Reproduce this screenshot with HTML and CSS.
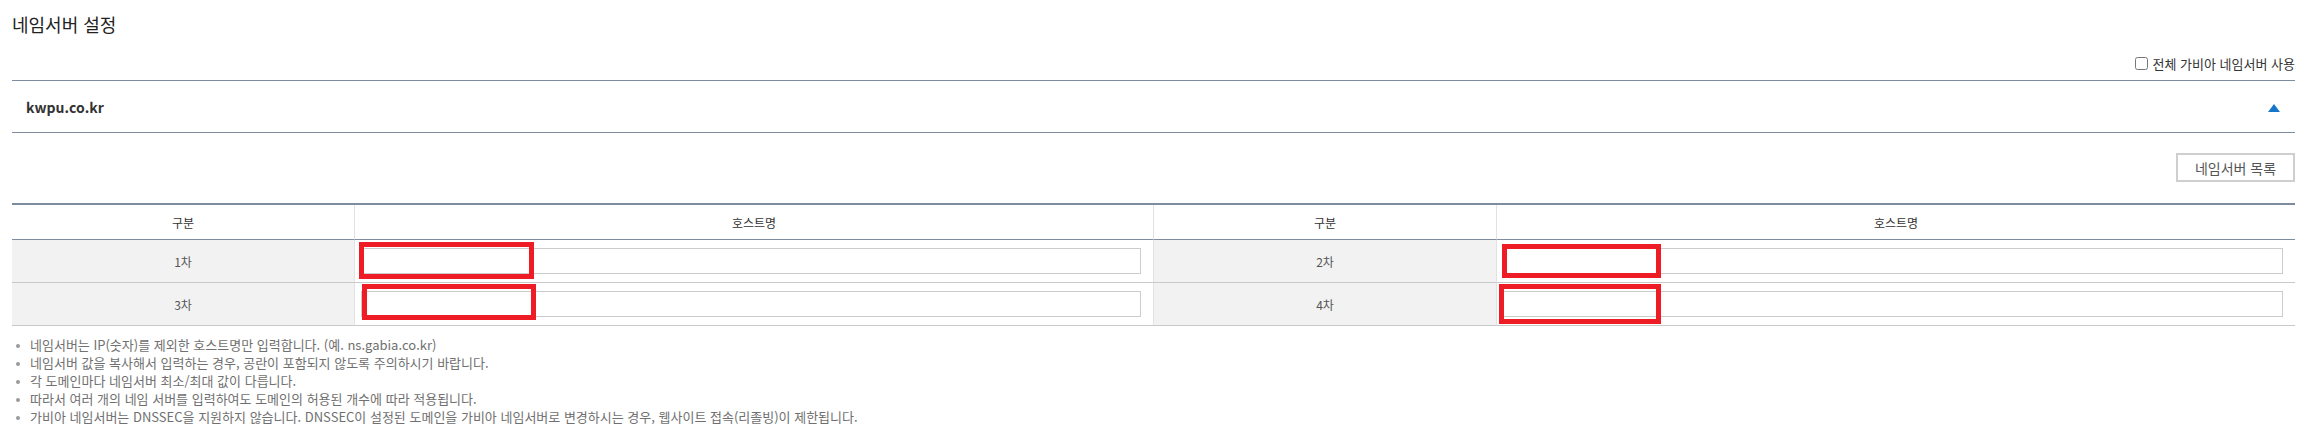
FILE: index.html
```html
<!DOCTYPE html>
<html lang="ko">
<head>
<meta charset="utf-8">
<title>네임서버 설정</title>
<link rel="stylesheet" href="styles.css">
</head>
<body>
<div class="page">
  <h2 class="title">네임서버 설정</h2>
  <div class="opt-row">
    <label class="chk"><input type="checkbox" class="chk-box"><span>전체 가비아 네임서버 사용</span></label>
  </div>
  <div class="domain-bar">
    <span class="domain">kwpu.co.kr</span>
    <span class="arrow"></span>
  </div>
  <div class="btn-row">
    <button class="btn" type="button">네임서버 목록</button>
  </div>
  <div class="ns-grid">
    <div class="hd">구분</div>
    <div class="hd sep">호스트명</div>
    <div class="hd sep">구분</div>
    <div class="hd sep">호스트명</div>

    <div class="lbl">1차</div>
    <div class="inp sep"><input type="text" class="field"><span class="mark m1"></span></div>
    <div class="lbl sep">2차</div>
    <div class="inp sep"><input type="text" class="field"><span class="mark m2"></span></div>

    <div class="lbl">3차</div>
    <div class="inp sep"><input type="text" class="field"><span class="mark m3"></span></div>
    <div class="lbl sep">4차</div>
    <div class="inp sep"><input type="text" class="field"><span class="mark m4"></span></div>
  </div>
  <ul class="notes">
    <li>네임서버는 IP(숫자)를 제외한 호스트명만 입력합니다. (예. ns.gabia.co.kr)</li>
    <li>네임서버 값을 복사해서 입력하는 경우, 공란이 포함되지 않도록 주의하시기 바랍니다.</li>
    <li>각 도메인마다 네임서버 최소/최대 값이 다릅니다.</li>
    <li>따라서 여러 개의 네임 서버를 입력하여도 도메인의 허용된 개수에 따라 적용됩니다.</li>
    <li>가비아 네임서버는 DNSSEC을 지원하지 않습니다. DNSSEC이 설정된 도메인을 가비아 네임서버로 변경하시는 경우, 웹사이트 접속(리졸빙)이 제한됩니다.</li>
  </ul>
</div>
</body>
</html>
```

FILE: styles.css
```css
html, body {
  margin: 0;
  padding: 0;
  background: #ffffff;
}
body {
  font-family: "Noto Sans CJK KR", "Noto Sans", sans-serif;
  color: #333333;
}
.page {
  padding: 0 12px;
}
.title {
  margin: 0;
  padding-top: 12px;
  font-size: 18px;
  line-height: 24px;
  font-weight: 400;
  color: #222222;
}
.opt-row {
  height: 44px;
  box-sizing: border-box;
  padding-top: 10px;
  display: flex;
  justify-content: flex-end;
  align-items: center;
}
.chk {
  display: flex;
  align-items: center;
  gap: 5px;
  font-size: 13px;
  color: #333333;
}
.chk-box {
  margin: 0;
  width: 13px;
  height: 13px;
}
.domain-bar {
  height: 53px;
  box-sizing: border-box;
  border-top: 1px solid #7d8d9d;
  border-bottom: 1px solid #7d8d9d;
  display: flex;
  align-items: center;
  justify-content: space-between;
  padding: 0 15px 0 14px;
}
.domain {
  font-size: 14px;
  font-weight: 700;
  color: #333333;
}
.arrow {
  width: 0;
  height: 0;
  border-left: 6px solid transparent;
  border-right: 6px solid transparent;
  border-bottom: 8px solid #1676c9;
  margin-top: 2px;
}
.btn-row {
  display: flex;
  justify-content: flex-end;
  padding: 20px 0 21px;
}
.btn {
  width: 119px;
  height: 29px;
  box-sizing: border-box;
  border: 2px solid #cfcfcf;
  background: #ffffff;
  font-family: "Noto Sans CJK KR", "Noto Sans", sans-serif;
  font-size: 14px;
  color: #555555;
  padding: 0;
}
.ns-grid {
  display: grid;
  grid-template-columns: 342fr 799fr 343fr 799fr;
  border-top: 2px solid #7d8d9d;
}
.hd {
  height: 35px;
  box-sizing: border-box;
  border-bottom: 1px solid #7d8d9d;
  display: flex;
  align-items: center;
  justify-content: center;
  font-size: 12px;
  color: #333333;
  background: #ffffff;
}
.sep {
  border-left: 1px solid #e2e2e2;
}
.lbl {
  height: 43px;
  box-sizing: border-box;
  border-bottom: 1px solid #c8c8c8;
  background: #f2f2f2;
  display: flex;
  align-items: center;
  justify-content: center;
  font-size: 12px;
  color: #555555;
}
.inp {
  position: relative;
  height: 43px;
  box-sizing: border-box;
  border-bottom: 1px solid #c8c8c8;
  display: flex;
  align-items: center;
  padding: 0 12px 0 6px;
  background: #ffffff;
}
.field {
  width: 100%;
  height: 26px;
  box-sizing: border-box;
  border: 1px solid #cccccc;
  margin: 0;
  padding: 0 6px;
  font-size: 12px;
  background: #ffffff;
}
.mark {
  position: absolute;
  box-sizing: border-box;
  border: 5px solid #ee1c25;
  pointer-events: none;
}
.m1 { left: 4px; top: 2px; width: 175px; height: 37px; }
.m2 { left: 5px; top: 4px; width: 159px; height: 34px; }
.m3 { left: 7px; top: 1px; width: 174px; height: 36px; }
.m4 { left: 2px; top: 1px; width: 162px; height: 40px; }
.notes {
  list-style: none;
  margin: 10px 0 0;
  padding: 0 0 0 18px;
  font-size: 13px;
  line-height: 18px;
  color: #707070;
}
.notes li {
  position: relative;
}
.notes li::before {
  content: "";
  position: absolute;
  left: -14px;
  top: 8px;
  width: 4px;
  height: 4px;
  border-radius: 50%;
  background: #9a9a9a;
}
```
